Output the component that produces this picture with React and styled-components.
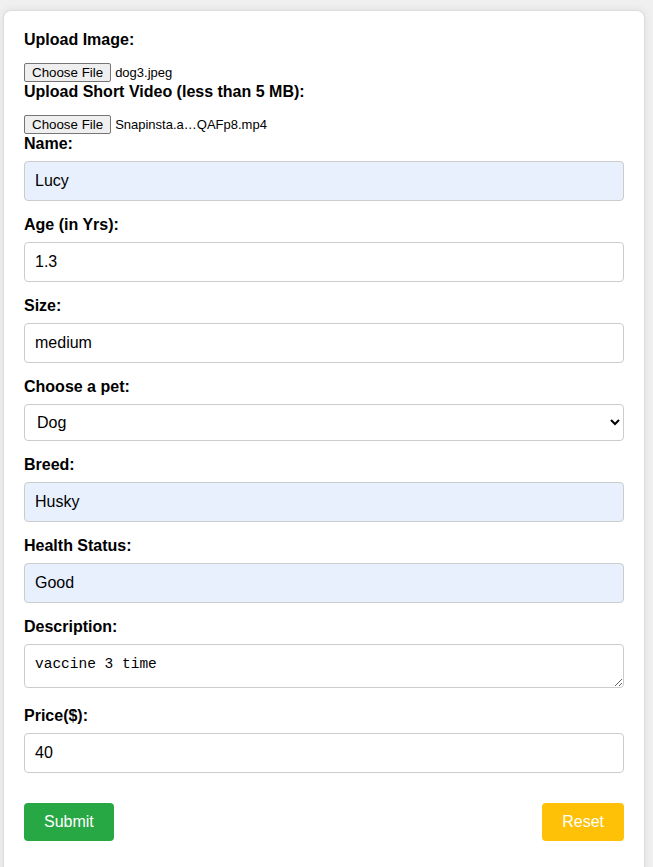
import React, { useState } from 'react'
import styled, { createGlobalStyle } from 'styled-components'

const GlobalStyle = createGlobalStyle`
  html, body {
    margin: 0;
    padding: 0;
    background: #f0f0f0;
    font-family: "Liberation Sans", Arial, sans-serif;
  }
`

const Card = styled.form`
  box-sizing: border-box;
  width: 642px;
  margin: 10px 0 0 3px;
  padding: 20px;
  background: #fff;
  border: 1px solid #dcdcdc;
  border-radius: 8px;
  box-shadow: 0 0 8px rgba(0, 0, 0, 0.08);
  min-height: 880px;
`

const Label = styled.label`
  display: block;
  font-size: 16px;
  font-weight: bold;
  color: #000;
  line-height: 18px;
  margin-bottom: 8px;
`

// padding, not margin, so it doesn't collapse into the label's margin
const FileRow = styled.div`
  display: flex;
  align-items: flex-start;
  gap: 4px;
  height: 20px;
  padding-top: 6px;
  font-size: 13px;
  color: #000;
  line-height: 19px;
`

const FileButton = styled.span`
  box-sizing: border-box;
  height: 19px;
  padding: 0 7px;
  display: inline-flex;
  align-items: center;
  font-size: 13.33px;
  color: #000;
  background: #efefef;
  border: 1px solid #767676;
  border-radius: 2px;
`

const TextInput = styled.input`
  display: block;
  box-sizing: border-box;
  width: 100%;
  height: 40px;
  padding: 10px;
  margin: 0 0 15px;
  font-family: "Liberation Sans", Arial, sans-serif;
  font-size: 16px;
  color: #000;
  background: ${p => (p.$filled ? '#e8f0fe' : '#fff')};
  border: 1px solid #ccc;
  border-radius: 4px;
  outline: none;
`

const Select = styled.select`
  display: block;
  box-sizing: border-box;
  width: 100%;
  height: 37px;
  padding: 0 8px;
  margin: 0 0 15px;
  font-family: "Liberation Sans", Arial, sans-serif;
  font-size: 16px;
  color: #000;
  background: #fff;
  border: 1px solid #ccc;
  border-radius: 4px;
`

const TextArea = styled.textarea`
  display: block;
  box-sizing: border-box;
  width: 100%;
  height: 44px;
  padding: 11px 10px;
  margin: 0 0 19px;
  font-family: "Liberation Mono", "DejaVu Sans Mono", monospace;
  font-size: 14.5px;
  line-height: 17px;
  color: #000;
  border: 1px solid #ccc;
  border-radius: 4px;
  outline: none;
`

const Actions = styled.div`
  display: flex;
  justify-content: space-between;
  margin-top: 30px;
`

const Button = styled.button`
  height: 38px;
  padding: 0 20px;
  font-family: "Liberation Sans", Arial, sans-serif;
  font-size: 16px;
  color: #fff;
  background: ${p => p.$bg};
  border: none;
  border-radius: 4px;
  cursor: pointer;
`

function App () {
  const [pet, setPet] = useState({
    name: 'Lucy',
    age: '1.3',
    size: 'medium',
    type: 'Dog',
    breed: 'Husky',
    health: 'Good',
    description: 'vaccine 3 time',
    price: '40',
  })

  const set = key => ev => setPet({ ...pet, [key]: ev.target.value })

  return <>
    <GlobalStyle />
    <Card onSubmit={ev => ev.preventDefault()}>
      <Label>Upload Image:</Label>
      <FileRow>
        <FileButton>Choose File</FileButton>
        <span>dog3.jpeg</span>
      </FileRow>
      <Label>Upload Short Video (less than 5 MB):</Label>
      <FileRow>
        <FileButton>Choose File</FileButton>
        <span>Snapinsta.a…QAFp8.mp4</span>
      </FileRow>

      <Label>Name:</Label>
      <TextInput $filled value={pet.name} onChange={set('name')} />

      <Label>Age (in Yrs):</Label>
      <TextInput value={pet.age} onChange={set('age')} />

      <Label>Size:</Label>
      <TextInput value={pet.size} onChange={set('size')} />

      <Label>Choose a pet:</Label>
      <Select value={pet.type} onChange={set('type')}>
        <option>Dog</option>
        <option>Cat</option>
        <option>Bird</option>
      </Select>

      <Label>Breed:</Label>
      <TextInput $filled value={pet.breed} onChange={set('breed')} />

      <Label>Health Status:</Label>
      <TextInput $filled value={pet.health} onChange={set('health')} />

      <Label>Description:</Label>
      <TextArea value={pet.description} onChange={set('description')} />

      <Label>Price($):</Label>
      <TextInput value={pet.price} onChange={set('price')} />

      <Actions>
        <Button type="submit" $bg="#28a745">Submit</Button>
        <Button type="reset" $bg="#ffc107">Reset</Button>
      </Actions>
    </Card>
  </>
}

export default App
